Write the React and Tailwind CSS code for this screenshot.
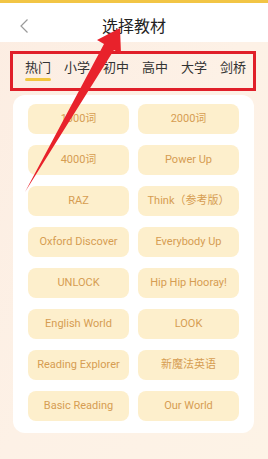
import React from "react";

const tabs = ["热门", "小学", "初中", "高中", "大学", "剑桥"];

const books = [
  "1000词",
  "2000词",
  "4000词",
  "Power Up",
  "RAZ",
  "Think（参考版）",
  "Oxford Discover",
  "Everybody Up",
  "UNLOCK",
  "Hip Hip Hooray!",
  "English World",
  "LOOK",
  "Reading Explorer",
  "新魔法英语",
  "Basic Reading",
  "Our World",
];

const font = { fontFamily: 'Roboto, "Noto Sans CJK SC", sans-serif' };

export default function App() {
  return (
    <div
      className="relative w-[268px] h-[459px] overflow-hidden bg-gradient-to-br from-[#fcede2] via-[#fdf1e6] to-[#fdf3e6]"
      style={font}
    >
      {/* top strip */}
      <div className="h-[3px] bg-[#f2c545]" />

      {/* header */}
      <div className="relative flex h-[39px] items-start justify-center bg-white pt-[16px]">
        <svg
          className="absolute left-[19px] top-[15px]"
          width="10"
          height="16"
          viewBox="0 0 10 16"
          fill="none"
        >
          <path d="M8.5 1.5 2 8l6.5 6.5" stroke="#9a9a9a" strokeWidth="1.2" />
        </svg>
        <span className="text-[16px] text-[#222] leading-none">选择教材</span>
      </div>

      {/* tabs */}
      <div className="ml-[25px] w-[223px] overflow-hidden pt-[19px] h-[50px]">
        <div className="flex gap-[13px] whitespace-nowrap">
          {tabs.map((t, i) => (
            <div key={t} className="flex flex-col items-stretch shrink-0">
              <span className="text-[13px] leading-[14px] text-[#333]">{t}</span>
              {i === 0 && (
                <div className="mt-[3px] h-[3px] rounded-full bg-[#f2c640]" />
              )}
            </div>
          ))}
        </div>
      </div>

      {/* card */}
      <div className="mx-[13px] mt-[3px] w-[241px] rounded-[12px] bg-white px-[15px] pt-[9px] pb-[12px]">
        <div className="grid grid-cols-2 gap-x-[9px] gap-y-[11px]">
          {books.map((b) => (
            <div
              key={b}
              className="flex h-[30px] items-center justify-center rounded-[8px] bg-[#fdefcc] text-[11px] text-[#d69d52] whitespace-nowrap"
            >
              {b}
            </div>
          ))}
        </div>
      </div>

      {/* annotation overlay */}
      <svg
        className="pointer-events-none absolute inset-0"
        width="268"
        height="459"
        viewBox="0 0 268 459"
      >
        <rect
          x="11.5"
          y="52.5"
          width="243"
          height="37"
          fill="none"
          stroke="#e01f29"
          strokeWidth="3"
        />
        <polygon
          points="120,28 121,54 114,50 25,192 104,44 97,40"
          fill="#e8222b"
        />
      </svg>
    </div>
  );
}
